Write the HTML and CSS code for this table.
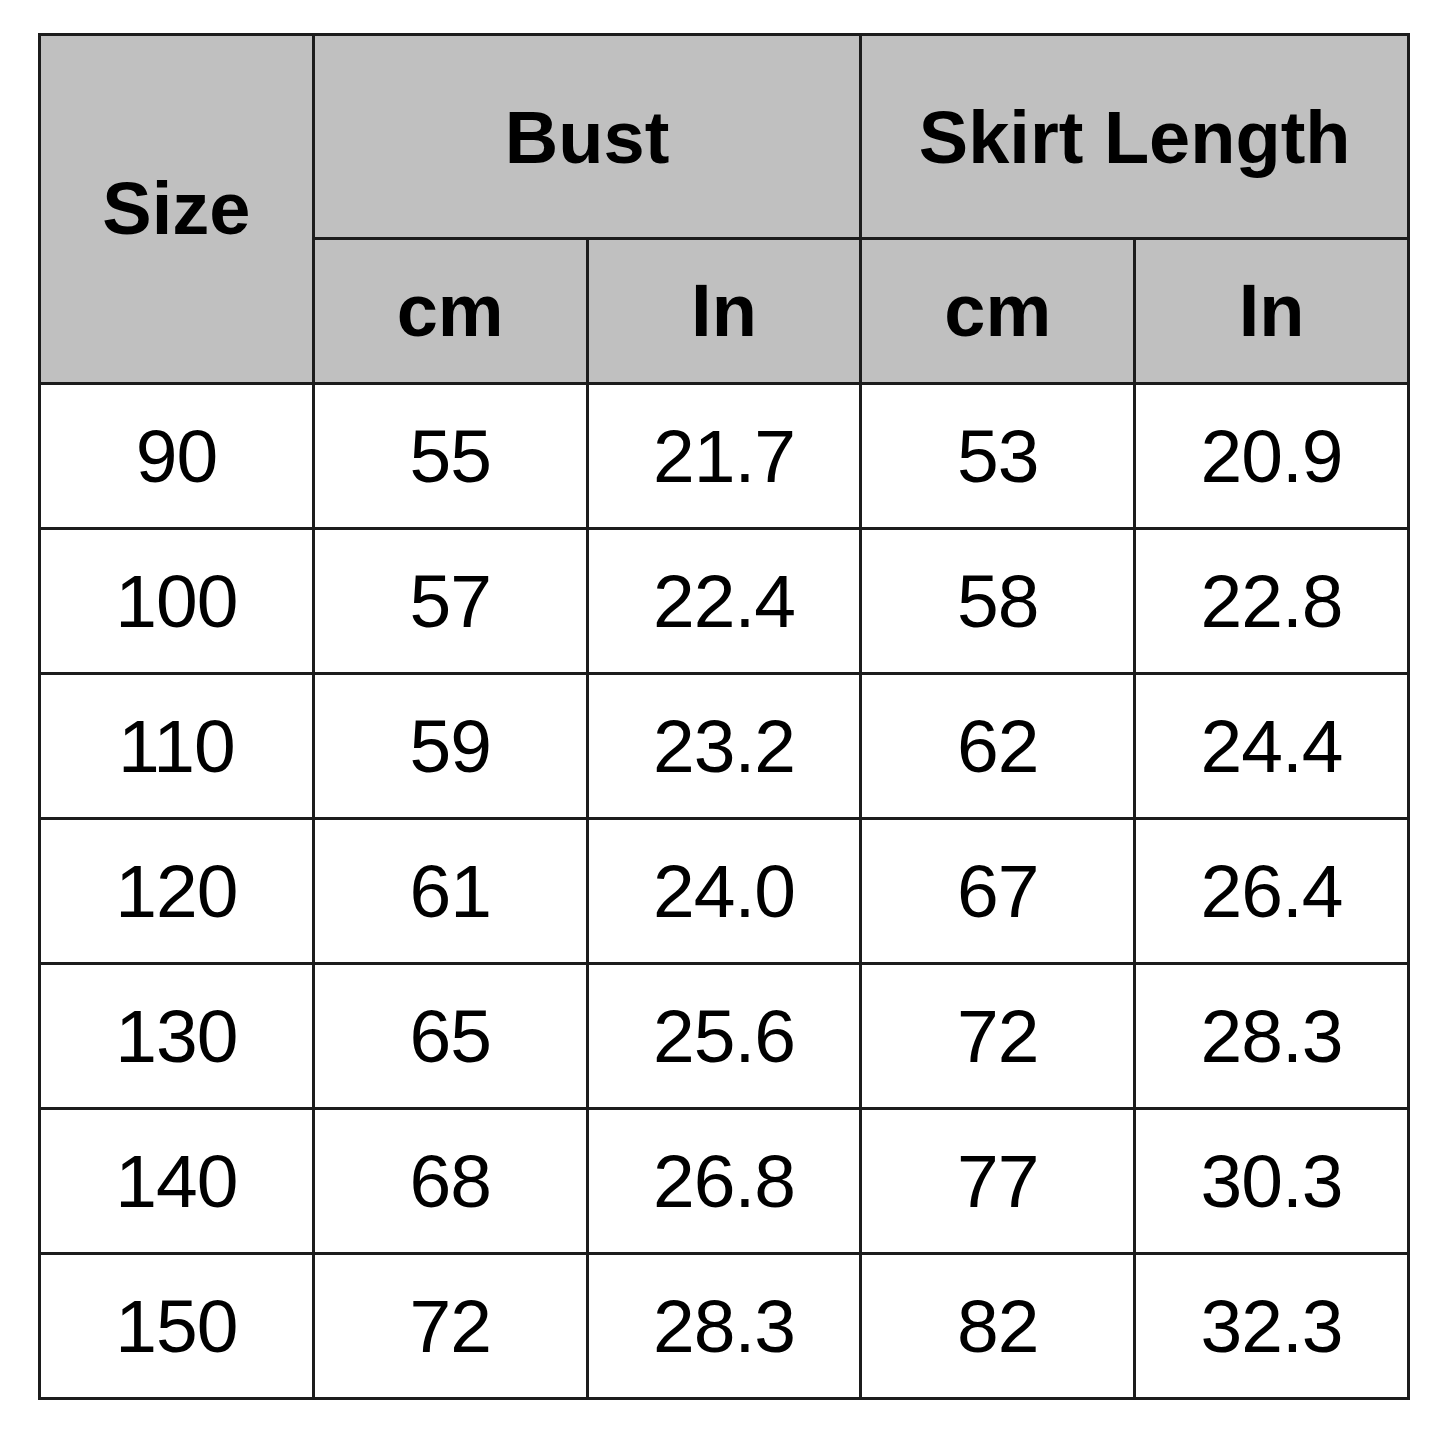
FILE: index.html
```html
<!DOCTYPE html>
<html>
<head>
<meta charset="utf-8">
<link rel="stylesheet" href="styles.css">
</head>
<body>
<table class="chart">
  <colgroup><col class="c"><col class="c"><col class="c"><col class="c"><col class="c"></colgroup>
  <thead>
    <tr class="h1">
      <th rowspan="2" class="size">Size</th>
      <th colspan="2">Bust</th>
      <th colspan="2">Skirt Length</th>
    </tr>
    <tr class="h2">
      <th>cm</th><th>In</th><th>cm</th><th>In</th>
    </tr>
  </thead>
  <tbody>
    <tr><td>90</td><td>55</td><td>21.7</td><td>53</td><td>20.9</td></tr>
    <tr><td>100</td><td>57</td><td>22.4</td><td>58</td><td>22.8</td></tr>
    <tr><td>110</td><td>59</td><td>23.2</td><td>62</td><td>24.4</td></tr>
    <tr><td>120</td><td>61</td><td>24.0</td><td>67</td><td>26.4</td></tr>
    <tr><td>130</td><td>65</td><td>25.6</td><td>72</td><td>28.3</td></tr>
    <tr><td>140</td><td>68</td><td>26.8</td><td>77</td><td>30.3</td></tr>
    <tr><td>150</td><td>72</td><td>28.3</td><td>82</td><td>32.3</td></tr>
  </tbody>
</table>
</body>
</html>
```
FILE: styles.css
```css
html, body {
  margin: 0;
  padding: 0;
  background: #ffffff;
}
body {
  padding: 33px 0 0 38px;
  font-family: "Liberation Sans", Arial, sans-serif;
  color: #000;
}
.chart {
  border-collapse: separate;
  border-spacing: 3px;
  background: #1c1c1c;
  table-layout: fixed;
  width: 1372px;
}
.chart th, .chart td {
  padding: 0;
  text-align: center;
  vertical-align: middle;
  line-height: 1;
}
.chart th {
  background: #c0c0c0;
  font-weight: bold;
  font-size: 74px;
}
.chart td {
  background: #ffffff;
  font-weight: normal;
  font-size: 75px;
  letter-spacing: -1px;
  height: 142px;
}
.h1 th {
  height: 199px;
}
.h1 th:not(.size) {
  padding-top: 2px;
}
.h2 th {
  height: 142px;
}
.size {
  padding-top: 10px;
}
```
